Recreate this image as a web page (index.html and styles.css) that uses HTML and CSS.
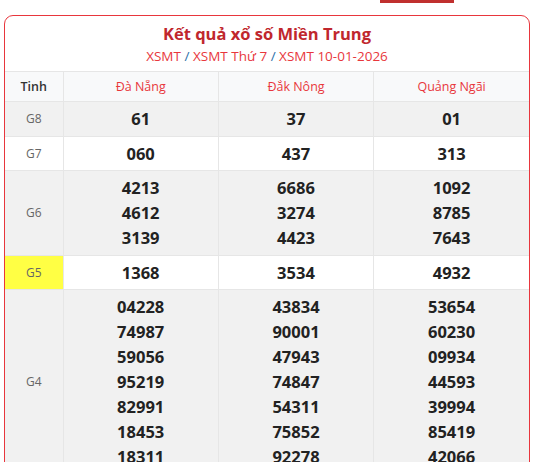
FILE: index.html
```html
<!DOCTYPE html>
<html lang="vi">
<head>
<meta charset="utf-8">
<link rel="stylesheet" href="styles.css">
</head>
<body>
<div class="topbar"></div>
<div class="card">
  <div class="card-head">
    <h2 class="title">Kết quả xổ số Miền Trung</h2>
    <div class="crumbs"><a>XSMT</a> <span class="sep">/</span> <a>XSMT Thứ 7</a> <span class="sep">/</span> <a>XSMT 10-01-2026</a></div>
  </div>
  <table class="results">
    <colgroup><col class="c-label"><col class="c-prov"><col class="c-prov"><col class="c-prov"></colgroup>
    <thead>
      <tr><th class="lbl-h">Tinh</th><th>Đà Nẵng</th><th>Đắk Nông</th><th>Quảng Ngãi</th></tr>
    </thead>
    <tbody>
      <tr class="alt"><td class="lbl">G8</td><td>61</td><td>37</td><td>01</td></tr>
      <tr><td class="lbl">G7</td><td>060</td><td>437</td><td>313</td></tr>
      <tr class="alt"><td class="lbl">G6</td><td>4213<br>4612<br>3139</td><td>6686<br>3274<br>4423</td><td>1092<br>8785<br>7643</td></tr>
      <tr><td class="lbl hl">G5</td><td>1368</td><td>3534</td><td>4932</td></tr>
      <tr class="alt"><td class="lbl">G4</td><td>04228<br>74987<br>59056<br>95219<br>82991<br>18453<br>18311</td><td>43834<br>90001<br>47943<br>74847<br>54311<br>75852<br>92278</td><td>53654<br>60230<br>09934<br>44593<br>39994<br>85419<br>42066</td></tr>
    </tbody>
  </table>
</div>
</body>
</html>
```
FILE: styles.css
```css
html, body { margin: 0; padding: 0; background: #fff; }
body { font-family: "Open Sans", "Noto Sans", sans-serif; color: #222; }
.topbar { width: 74px; height: 3px; margin-left: 380px; background: #c0302e; }
.card {
  margin: 12px 4px 0 4px;
  border: 1px solid #e8363d;
  border-radius: 9px;
  background: #fff;
  overflow: hidden;
}
.card-head { text-align: center; padding: 6px 0 5px; }
.title { margin: 0; font-size: 16.5px; line-height: 24px; font-weight: 700; color: #c0272d; }
.crumbs { font-size: 13.5px; line-height: 20px; color: #e8373c; }
.crumbs a { color: #e8373c; }
.crumbs .sep { color: #2c6fa8; }
.results { width: 100%; border-collapse: collapse; table-layout: fixed; }
.c-label { width: 58px; }
.results th, .results td { border: 1px solid #e6e6e6; text-align: center; }
.results tr > :first-child { border-left: none; }
.results tr > :last-child { border-right: none; }
.results thead tr { background: #f8f9fa; }
.results th { height: 29px; padding: 0; font-size: 12.5px; font-weight: 400; color: #e8373c; }
.results th.lbl-h { color: #333; font-weight: 600; }
.results td { padding: 4.25px 0; font-size: 16.5px; line-height: 25px; font-weight: 700; color: #222; }
.results tr.alt { background: #f1f1f1; }
.results td.lbl { font-size: 12px; font-weight: 400; color: #666; }
.results td.hl { background: #ffff44; }
```
